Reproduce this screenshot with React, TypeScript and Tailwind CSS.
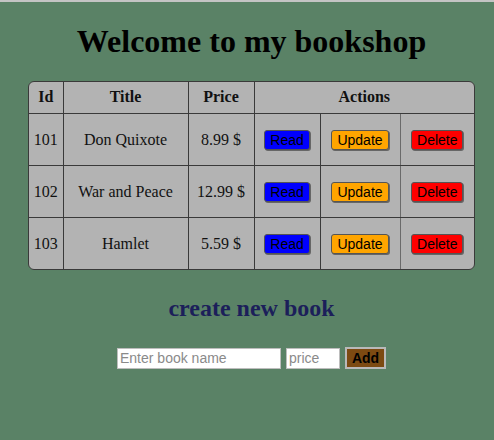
const books = [
  { id: 101, title: "Don Quixote", price: "8.99 $" },
  { id: 102, title: "War and Peace", price: "12.99 $" },
  { id: 103, title: "Hamlet", price: "5.59 $" },
];

const serif = "font-['Liberation_Serif','Times_New_Roman',serif]";
const sans = "font-['Liberation_Sans',Arial,sans-serif]";
const btn =
  "px-[5px] py-[1px] text-[14px] leading-[16px] text-black border border-[#555] rounded-[3px] shadow-[1px_1px_0_#666] font-['Liberation_Sans',Arial,sans-serif]";

export default function App() {
  return (
    <div className={`min-h-screen bg-[#5a8266] border-t-2 border-[#c4c4c4] pl-[9px] ${serif}`}>
      {/* HEADER */}
      <h1 className="text-[32px] leading-[37px] font-bold text-center text-black pt-[21px] pb-[21px]">
        Welcome to my bookshop
      </h1>

      {/* BOOK TABLE */}
      <div className="w-[447px] mx-auto rounded-md overflow-hidden border border-[#3a3a3a] bg-[#b3b3b3]">
        <table className="w-full border-collapse text-[16px] text-[#111] table-fixed">
          <colgroup>
            <col className="w-[34px]" />
            <col className="w-[125px]" />
            <col className="w-[66px]" />
            <col className="w-[66px]" />
            <col className="w-[80px]" />
            <col />
          </colgroup>
          <thead>
            <tr className="h-[31px]">
              <th className="border-r border-b border-[#3a3a3a] font-bold">Id</th>
              <th className="border-r border-b border-[#3a3a3a] font-bold">Title</th>
              <th className="border-r border-b border-[#3a3a3a] font-bold">Price</th>
              <th colSpan={3} className="border-b border-[#3a3a3a] font-bold">
                Actions
              </th>
            </tr>
          </thead>
          <tbody>
            {books.map((book, i) => {
              const last = i === books.length - 1;
              const cell = `text-center pt-[2px] ${last ? "" : "border-b"} border-[#3a3a3a]`;
              return (
                <tr key={book.id} className="h-[52px]">
                  <td className={`${cell} border-r`}>{book.id}</td>
                  <td className={`${cell} border-r`}>{book.title}</td>
                  <td className={`${cell} border-r`}>{book.price}</td>
                  <td className={`${cell} border-r`}>
                    <button className={`${btn} bg-[#0000ff]`}>Read</button>
                  </td>
                  <td className={`${cell} border-r border-r-[#6a6a6a]`}>
                    <button className={`${btn} bg-[#ffa500]`}>Update</button>
                  </td>
                  <td className={cell}>
                    <button className={`${btn} bg-[#ff0000]`}>Delete</button>
                  </td>
                </tr>
              );
            })}
          </tbody>
        </table>
      </div>

      {/* CREATE FORM */}
      <h2 className="text-[24px] leading-[28px] font-bold text-center text-[#1c1f5a] mt-[24px]">
        create new book
      </h2>

      <div className={`flex justify-center items-center gap-[5px] mt-[25px] ${sans}`}>
        <input
          placeholder="Enter book name"
          className="w-[164px] h-[21px] bg-white border border-[#bdbdbd] px-[2px] text-[14px] text-black placeholder:text-[#8a8a8a] outline-none"
        />
        <input
          placeholder="price"
          className="w-[54px] h-[21px] bg-white border border-[#bdbdbd] px-[2px] text-[14px] text-black placeholder:text-[#8a8a8a] outline-none"
        />
        <button className="w-[41px] h-[22px] bg-[#7c4a12] border-2 border-[#b9b9b9] text-[14px] font-bold text-black leading-none">
          Add
        </button>
      </div>
    </div>
  );
}
